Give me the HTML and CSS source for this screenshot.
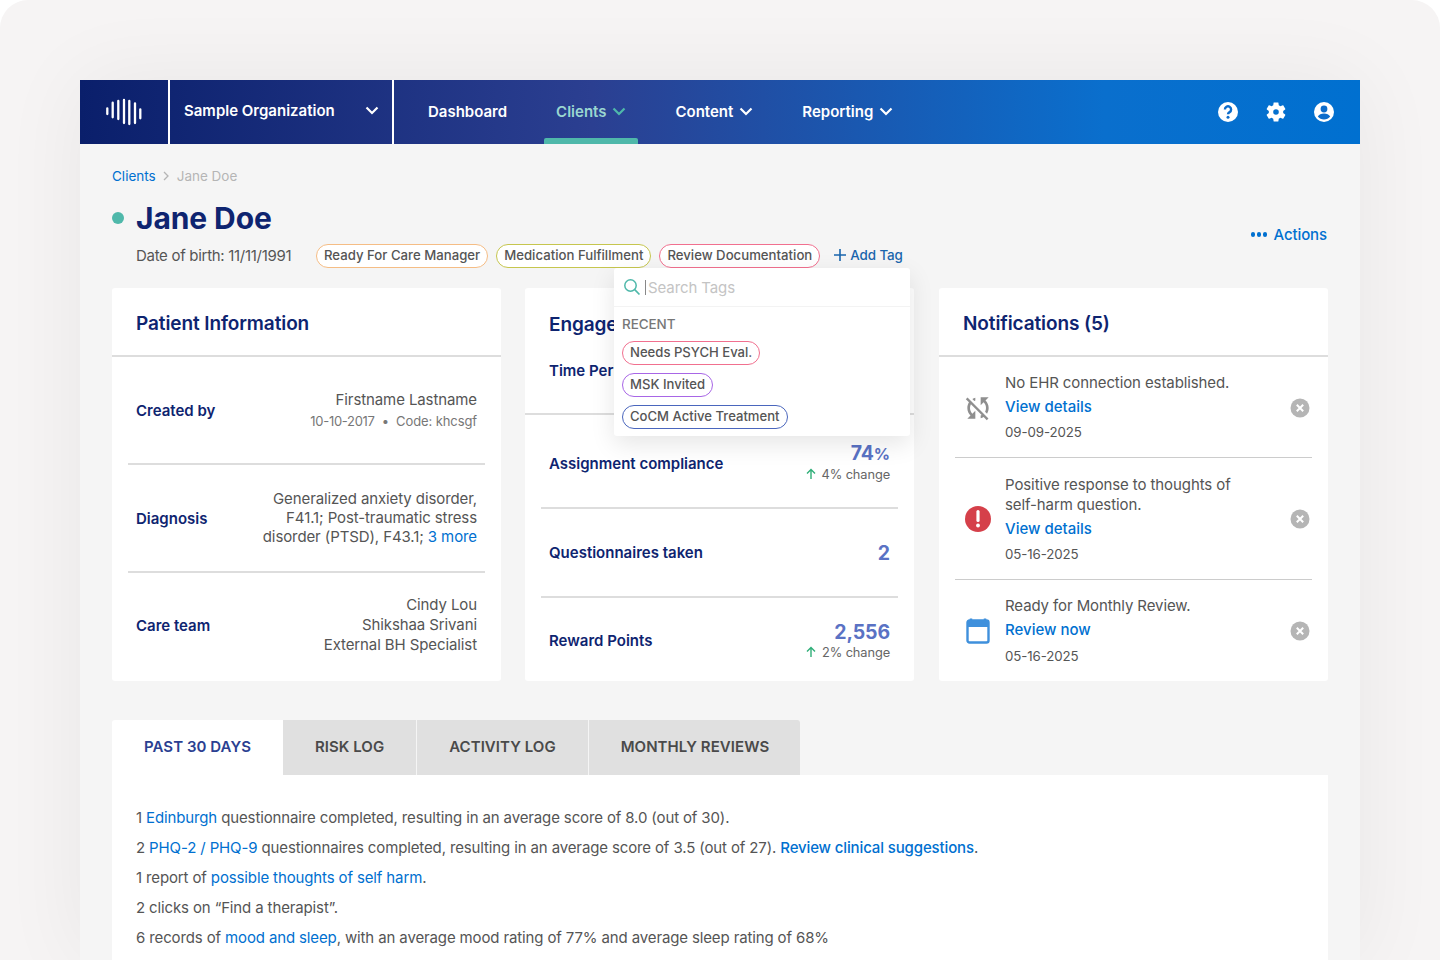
FILE: index.html
```html
<!DOCTYPE html>
<html lang="en">
<head>
  <meta charset="UTF-8">
  <title>Jane Doe - Clients</title>
  <link rel="stylesheet" href="styles.css">
</head>
<body>
  <div class="frame">
    <div class="app">
      <header class="topbar">
        <div class="logo">
          <svg width="38" height="28" viewBox="0 0 38 28">
            <g stroke="#fff" stroke-width="2.3" stroke-linecap="round">
              <path d="M2.300 10.300v5.700M7.700 4.700v14.600M13.300 3v18M19 2v23M24.300 3v23M30 5.300v19.700M35.300 11.300v9"/>
            </g>
          </svg>
        </div>
        <div class="org">
          <span>Sample Organization</span>
          <svg class="chev" width="14" height="9" viewBox="0 0 14 9"><path d="M1.500 1.500 7 7l5.500-5.500"/></svg>
        </div>
        <nav class="nav">
          <a class="nav-item">Dashboard</a>
          <a class="nav-item active">Clients <svg class="chev" width="14" height="9" viewBox="0 0 14 9"><path d="M1.500 1.500 7 7l5.500-5.500"/></svg></a>
          <a class="nav-item">Content <svg class="chev" width="14" height="9" viewBox="0 0 14 9"><path d="M1.500 1.500 7 7l5.500-5.500"/></svg></a>
          <a class="nav-item">Reporting <svg class="chev" width="14" height="9" viewBox="0 0 14 9"><path d="M1.500 1.500 7 7l5.500-5.500"/></svg></a>
        </nav>
        <div class="top-icons">
          <svg width="24" height="24" viewBox="0 0 24 24">
            <circle cx="12" cy="12" r="10" fill="#fff"/>
            <path d="M8.900 9.400a3.100 3.100 0 1 1 4.700 2.700c-1 .6-1.600 1.100-1.600 2.200" fill="none" stroke="#0c6ccb" stroke-width="2.400"/>
            <circle cx="12" cy="17.300" r="1.500" fill="#0c6ccb"/>
          </svg>
          <svg width="24" height="24" viewBox="0 0 24 24">
            <path fill="#fff" fill-rule="evenodd" d="M19.140 12.940c.04-.3.06-.61.06-.94 0-.32-.02-.64-.07-.94l2.030-1.580c.18-.14.23-.41.12-.61l-1.920-3.320c-.12-.22-.37-.29-.59-.22l-2.390.96c-.5-.38-1.030-.7-1.620-.94l-.36-2.540c-.04-.24-.24-.41-.48-.41h-3.840c-.24 0-.43.17-.47.41l-.36 2.540c-.59.24-1.130.57-1.620.94l-2.390-.96c-.22-.08-.47 0-.59.22L2.740 8.870c-.12.21-.08.47.12.61l2.030 1.580c-.05.3-.09.63-.09.94s.02.64.07.94l-2.030 1.580c-.18.14-.23.41-.12.61l1.920 3.320c.12.22.37.29.59.22l2.390-.96c.5.38 1.030.7 1.620.94l.36 2.540c.05.24.24.41.48.41h3.840c.24 0 .44-.17.47-.41l.36-2.540c.59-.24 1.130-.56 1.620-.94l2.390.96c.22.08.47 0 .59-.22l1.920-3.320c.12-.22.07-.47-.12-.61l-2.010-1.580zM12 14.800a2.800 2.800 0 1 1 0-5.600 2.800 2.800 0 0 1 0 5.600z"/>
          </svg>
          <svg width="24" height="24" viewBox="0 0 24 24">
            <circle cx="12" cy="12" r="10" fill="#fff"/>
            <circle cx="12" cy="9" r="3.400" fill="#0c6ccb"/>
            <path d="M5.800 16.600c1.200-2 3.400-3 6.200-3s5 1 6.200 3c-1.500 1.900-3.700 3-6.200 3s-4.700-1.100-6.200-3z" fill="#0c6ccb"/>
          </svg>
        </div>
      </header>

      <main class="content">
        <div class="crumbs">
          <a class="link">Clients</a>
          <svg width="7" height="10" viewBox="0 0 7 10"><path d="M1 1l4 4-4 4" fill="none" stroke="#b5b5b5" stroke-width="1.300"/></svg>
          <span>Jane Doe</span>
        </div>

        <div class="head">
          <div>
            <div class="name-row">
              <span class="status-dot"></span>
              <h1>Jane Doe</h1>
            </div>
            <div class="meta-row">
              <span class="dob">Date of birth: 11/11/1991</span>
              <div class="tags">
                <span class="tag orange">Ready For Care Manager</span>
                <span class="tag olive">Medication Fulfillment</span>
                <span class="tag pink">Review Documentation</span>
                <a class="add-tag">
                  <svg width="12" height="12" viewBox="0 0 12 12"><path d="M6 0v12M0 6h12" stroke="#1a66ad" stroke-width="1.600"/></svg>
                  Add Tag
                </a>
              </div>
            </div>
          </div>
          <a class="actions"><span class="dots"><i></i><i></i><i></i></span>Actions</a>
        </div>

        <div class="tag-menu">
          <div class="tag-search">
            <svg width="18" height="18" viewBox="0 0 18 18"><circle cx="7.500" cy="7.500" r="5.700" fill="none" stroke="#4fb8aa" stroke-width="1.500"/><path d="M11.700 11.700 16.500 16.500" stroke="#4fb8aa" stroke-width="1.700"/></svg>
            <span class="caret"></span><span class="placeholder">Search Tags</span>
          </div>
          <div class="tag-recent">
            <div class="recent-label">RECENT</div>
            <span class="tag pink">Needs PSYCH Eval.</span>
            <span class="tag purple">MSK Invited</span>
            <span class="tag blue">CoCM Active Treatment</span>
          </div>
        </div>

        <div class="cards">
          <section class="card">
            <h2 class="card-title">Patient Information</h2>
            <div class="info-row">
              <div class="label">Created by</div>
              <div class="info-val created">
                <div>Firstname Lastname</div>
                <div class="small"><span class="small-date">10-10-2017</span> &nbsp;&bull;&nbsp; Code: khcsgf</div>
              </div>
            </div>
            <div class="info-row">
              <div class="label">Diagnosis</div>
              <div class="info-val tight">Generalized anxiety disorder,<br>F41.1; Post-traumatic stress<br>disorder (PTSD), F43.1; <a class="link">3 more</a></div>
            </div>
            <div class="info-row">
              <div class="label">Care team</div>
              <div class="info-val team">Cindy Lou<br>Shikshaa Srivani<br>External BH Specialist</div>
            </div>
          </section>

          <section class="card">
            <div class="engage-head">
              <h2 class="card-title plain">Engagement</h2>
              <div class="label">Time Period</div>
            </div>
            <div class="stat-row first">
              <div class="label">Assignment compliance</div>
              <div class="stat-val">
                <div class="num">74<span class="pct">%</span></div>
                <div class="change"><svg width="12" height="12" viewBox="0 0 12 12"><path d="M6 11V2M2 5.500 6 1.500l4 4" fill="none" stroke="#2fae78" stroke-width="1.400"/></svg>4% change</div>
              </div>
            </div>
            <div class="stat-row second">
              <div class="label">Questionnaires taken</div>
              <div class="stat-val"><div class="num">2</div></div>
            </div>
            <div class="stat-row third">
              <div class="label">Reward Points</div>
              <div class="stat-val">
                <div class="num">2,556</div>
                <div class="change"><svg width="12" height="12" viewBox="0 0 12 12"><path d="M6 11V2M2 5.500 6 1.500l4 4" fill="none" stroke="#2fae78" stroke-width="1.400"/></svg>2% change</div>
              </div>
            </div>
          </section>

          <section class="card">
            <h2 class="card-title">Notifications (5)</h2>
            <div class="note n1">
              <svg class="note-icon sync" width="32" height="32" viewBox="0 0 24 24"><path fill="#8f8f8f" d="M10 6.350V4.260c-.8.21-1.550.54-2.230.96l1.460 1.460c.25-.12.5-.24.77-.33zm-7.140-.94l2.360 2.360C4.450 8.990 4 10.440 4 12c0 2.210.91 4.200 2.360 5.640L4 20h6v-6l-2.240 2.240C6.680 15.150 6 13.660 6 12c0-1 .25-1.940.68-2.770l8.080 8.080c-.25.13-.5.25-.77.34v2.090c.8-.21 1.550-.54 2.230-.96l2.360 2.360 1.270-1.270L4.140 4.140 2.860 5.410zM20 4h-6v6l2.240-2.240C17.320 8.850 18 10.340 18 12c0 1-.25 1.940-.68 2.770l1.460 1.460C19.550 15.010 20 13.560 20 12c0-2.210-.91-4.200-2.360-5.640L20 4z"/></svg>
              <div class="note-body">
                <div>No EHR connection established.</div>
                <a class="link strong">View details</a>
                <div class="date">09-09-2025</div>
              </div>
              <svg class="close" width="20" height="20" viewBox="0 0 20 20"><circle cx="10" cy="10" r="9.500" fill="#b5b5b5"/><path d="M6.800 6.800l6.400 6.400M13.200 6.800l-6.400 6.400" stroke="#fff" stroke-width="2"/></svg>
            </div>
            <div class="note n2">
              <svg class="note-icon" width="28" height="28" viewBox="0 0 28 28"><circle cx="14" cy="14" r="13" fill="#d5404a"/><path d="M14 6.500v9" stroke="#fff" stroke-width="3.200" stroke-linecap="round"/><circle cx="14" cy="20.500" r="1.900" fill="#fff"/></svg>
              <div class="note-body">
                <div>Positive response to thoughts of<br>self-harm question.</div>
                <a class="link strong">View details</a>
                <div class="date">05-16-2025</div>
              </div>
              <svg class="close" width="20" height="20" viewBox="0 0 20 20"><circle cx="10" cy="10" r="9.500" fill="#b5b5b5"/><path d="M6.800 6.800l6.400 6.400M13.200 6.800l-6.400 6.400" stroke="#fff" stroke-width="2"/></svg>
            </div>
            <div class="note n3">
              <svg class="note-icon" width="28" height="28" viewBox="0 0 28 28"><path d="M7 1.500v4M21 1.500v4" stroke="#3f90dc" stroke-width="2.500"/><rect x="3.500" y="3.500" width="21" height="22" rx="2" fill="none" stroke="#3f90dc" stroke-width="2.400"/><path d="M3.500 3.500h21v6.500h-21z" fill="#3f90dc"/></svg>
              <div class="note-body">
                <div>Ready for Monthly Review.</div>
                <a class="link strong">Review now</a>
                <div class="date">05-16-2025</div>
              </div>
              <svg class="close" width="20" height="20" viewBox="0 0 20 20"><circle cx="10" cy="10" r="9.500" fill="#b5b5b5"/><path d="M6.800 6.800l6.400 6.400M13.200 6.800l-6.400 6.400" stroke="#fff" stroke-width="2"/></svg>
            </div>
          </section>
        </div>

        <div class="tabs">
          <a class="tab active">PAST 30 DAYS</a>
          <a class="tab">RISK LOG</a>
          <a class="tab">ACTIVITY LOG</a>
          <a class="tab">MONTHLY REVIEWS</a>
        </div>
        <div class="tab-panel">
          <p>1 <a class="link">Edinburgh</a> questionnaire completed, resulting in an average score of 8.0 (out of 30).</p>
          <p>2 <a class="link">PHQ-2 / PHQ-9</a> questionnaires completed, resulting in an average score of 3.5 (out of 27). <a class="link medium">Review clinical suggestions</a>.</p>
          <p>1 report of <a class="link">possible thoughts of self harm</a>.</p>
          <p>2 clicks on “Find a therapist”.</p>
          <p>6 records of <a class="link">mood and sleep</a>, with an average mood rating of 77% and average sleep rating of 68%</p>
        </div>
      </main>
    </div>
  </div>
</body>
</html>
```
FILE: styles.css
```css
* {
  box-sizing: border-box;
}

html, body {
  margin: 0;
  height: 960px;
  overflow: hidden;
}

body {
  font-family: Inter, "Open Sans", sans-serif;
  font-size: 15px;
  letter-spacing: -0.1px;
  color: #555;
  background: #fff;
}

.frame {
  height: 960px;
  padding: 80px 80px 0;
  background: #f6f4f4;
  border-radius: 28px 28px 0 0;
}

.app {
  height: 880px;
  background: #f5f5f5;
  box-shadow: 0 0 80px rgba(0, 0, 0, 0.06);
}

.link {
  color: #0070d0;
}

.link.strong, .link.medium {
  font-weight: 500;
}

.link.strong {
  letter-spacing: 0;
}

/* top bar */
.topbar {
  display: flex;
  height: 64px;
  background: linear-gradient(90deg, #0a1f6b 0%, #2b3f91 40%, #0a6fcd 80%, #0070d0 100%);
  color: #fff;
  font-weight: 600;
  letter-spacing: 0;
}

.logo {
  display: flex;
  align-items: center;
  justify-content: center;
  width: 90px;
  border-right: 2px solid #fff;
}

.org {
  display: flex;
  align-items: center;
  justify-content: space-between;
  width: 224px;
  padding: 0 13px 3px 14px;
  border-right: 2px solid #fff;
}

.chev {
  fill: none;
  stroke: #fff;
  stroke-width: 2.200;
}

.nav {
  display: flex;
  gap: 25px;
  padding-left: 22px;
}

.nav-item {
  position: relative;
  display: flex;
  align-items: center;
  gap: 6px;
  padding: 0 12px 1px;
}

.nav-item.active {
  color: #9ad6d0;
}

.nav-item.active::after {
  content: "";
  position: absolute;
  left: 0;
  right: 0;
  bottom: 0;
  height: 6px;
  background: #4fb8aa;
  border-radius: 2px 2px 0 0;
}

.nav-item.active .chev {
  stroke: #4fb8aa;
}

.top-icons {
  display: flex;
  align-items: center;
  gap: 24px;
  margin-left: auto;
  padding-right: 24px;
}

/* page head */
.content {
  position: relative;
  padding: 23px 32px 0;
}

.crumbs {
  display: flex;
  align-items: center;
  gap: 7px;
  height: 18px;
  font-size: 13.500px;
  letter-spacing: 0;
  color: #b5b5b5;
}

.head {
  display: flex;
  justify-content: space-between;
  align-items: flex-end;
  margin-top: 15px;
}

.name-row {
  display: flex;
  align-items: center;
  gap: 12px;
}

.status-dot {
  width: 12px;
  height: 12px;
  border-radius: 50%;
  background: #4fb8aa;
}

h1 {
  margin: 0;
  font-size: 30px;
  line-height: 36px;
  font-weight: 700;
  letter-spacing: -0.1px;
  color: #0e2470;
}

.meta-row {
  display: flex;
  align-items: center;
  margin: 8px 0 0 24px;
}

.dob {
  width: 180px;
  padding-bottom: 2px;
  letter-spacing: -0.3px;
}

.tags {
  display: flex;
  align-items: center;
  gap: 8px;
}

.tag {
  display: inline-block;
  height: 24px;
  padding: 0 7px;
  border: 1.500px solid #ccc;
  border-radius: 12px;
  background: #fff;
  font-size: 13.200px;
  font-weight: 500;
  line-height: 21px;
  letter-spacing: 0;
  white-space: nowrap;
}

.tag.orange { border-color: #f5bd85; }
.tag.olive { border-color: #c6c64e; }
.tag.pink { border-color: #f1708f; }
.tag.purple { border-color: #a866e6; }
.tag.blue { border-color: #4a66bd; }

.add-tag {
  display: flex;
  align-items: center;
  gap: 4px;
  margin-left: 6px;
  padding-bottom: 2px;
  font-size: 13.400px;
  font-weight: 500;
  color: #1a66ad;
}

.actions {
  display: flex;
  align-items: center;
  gap: 6px;
  margin: 0 1px 24px 0;
  font-weight: 500;
  color: #0070d0;
}

.dots {
  display: flex;
  gap: 1.700px;
}

.dots i {
  width: 4.500px;
  height: 4.500px;
  border-radius: 50%;
  background: #0070d0;
}

/* tag dropdown */
.tag-menu {
  position: absolute;
  left: 534px;
  top: 124px;
  z-index: 2;
  width: 296px;
  height: 168px;
  background: #fff;
  border-radius: 3px;
  box-shadow: 0 8px 24px rgba(0, 0, 0, 0.1);
}

.tag-search {
  display: flex;
  align-items: center;
  height: 39px;
  padding-left: 9px;
  border-bottom: 1px solid #f3f3f3;
  font-size: 15px;
}

.caret {
  width: 1px;
  height: 15px;
  margin: 0 2px 0 4px;
  background: #888;
}

.placeholder {
  color: #c4c4c4;
}

.tag-recent {
  display: flex;
  flex-direction: column;
  align-items: flex-start;
  gap: 8px;
  padding: 9px 8px 0;
}

.tag-recent .tag {
  font-size: 13.100px;
}

.recent-label {
  height: 17px;
  font-size: 13.500px;
  line-height: 16px;
  font-weight: 500;
  color: #777;
}

/* cards */
.cards {
  display: grid;
  grid-template-columns: 389px 389px 1fr;
  gap: 24px;
  height: 393px;
  margin-top: 20px;
}

.card {
  background: #fff;
  border-radius: 3px;
  display: flex;
  flex-direction: column;
}

.card:last-child {
  margin-left: 1px;
}

.card-title {
  flex: none;
  height: 69px;
  margin: 0;
  padding: 0 24px;
  border-bottom: 2px solid #ddd;
  font-size: 19px;
  line-height: 72px;
  font-weight: 600;
  letter-spacing: -0.1px;
  color: #0e2470;
}

.card-title.plain {
  height: auto;
  padding: 0;
  border: 0;
  line-height: 24px;
}

.label {
  font-weight: 600;
  letter-spacing: 0;
  color: #0e2470;
}

.info-row {
  flex: none;
  height: 108px;
  display: flex;
  justify-content: space-between;
  align-items: center;
  margin: 0 16px;
  padding: 0 8px;
  border-bottom: 2px solid #ddd;
}

.info-row:last-child {
  padding-bottom: 4px;
  border-bottom: 0;
}

.info-val {
  text-align: right;
  line-height: 19px;
}

.info-val.created {
  padding-top: 1px;
}

.info-val.tight {
  padding-bottom: 2px;
}

.info-val.team {
  line-height: 20px;
}

.small {
  margin-top: 3px;
  font-size: 13px;
  color: #777;
}

.small-date {
  letter-spacing: -0.3px;
}

.engage-head {
  flex: none;
  height: 127px;
  padding: 25px 24px 0;
  border-bottom: 2px solid #ddd;
}

.engage-head .label {
  margin-top: 24px;
}

.stat-row {
  display: flex;
  justify-content: space-between;
  align-items: center;
  margin: 0 16px;
  padding: 0 8px;
  border-bottom: 2px solid #ddd;
}

.stat-row.first { height: 94px; }
.stat-row.second { height: 89px; }
.stat-row.third { flex: 1; border-bottom: 0; }

.stat-row.first .label { padding-top: 4px; }
.stat-row.third .label { padding-top: 2px; }

.num {
  text-align: right;
  font-size: 19.500px;
  line-height: 24px;
  font-weight: 700;
  color: #5a72c4;
}

.pct {
  font-size: 16px;
}

.change {
  display: flex;
  align-items: center;
  gap: 5px;
  margin-top: 1px;
  font-size: 12.800px;
  color: #666;
}

.note {
  display: flex;
  align-items: center;
  margin: 0 16px;
  padding: 0 2px 0 9px;
  border-bottom: 1px solid #ccc;
}

.note.n1 { height: 101px; padding-top: 1px; }
.note.n2 { height: 122px; padding-top: 1px; }
.note.n3 { flex: 1; border-bottom: 0; }

.note-icon {
  flex: none;
}

.note-icon.sync {
  margin: 0 -2px;
}

.note-body {
  flex: 1;
  padding-left: 13px;
  line-height: 20px;
}

.note-body .link {
  display: block;
  margin-top: 4px;
}

.date {
  margin-top: 5px;
  font-size: 13.300px;
  line-height: 20px;
}

.n3 .date {
  margin-top: 6px;
}

/* tabs */
.tabs {
  display: flex;
  height: 55px;
  margin-top: 39px;
}

.tab {
  display: flex;
  align-items: center;
  padding: 0 32px 2px;
  margin-right: 1px;
  background: #e0e0e0;
  font-weight: 600;
  letter-spacing: 0.05px;
  color: #4a4a4a;
}

.tab:last-child {
  padding-right: 31px;
  border-radius: 0 3px 0 0;
}

.tab.active {
  margin-right: 0;
  background: #fff;
  color: #2b3f91;
  border-radius: 3px 0 0 0;
}

.tab-panel {
  height: 200px;
  padding: 28px 24px;
  background: #fff;
  letter-spacing: -0.13px;
}

.tab-panel p {
  margin: 0;
  line-height: 30px;
}
```
